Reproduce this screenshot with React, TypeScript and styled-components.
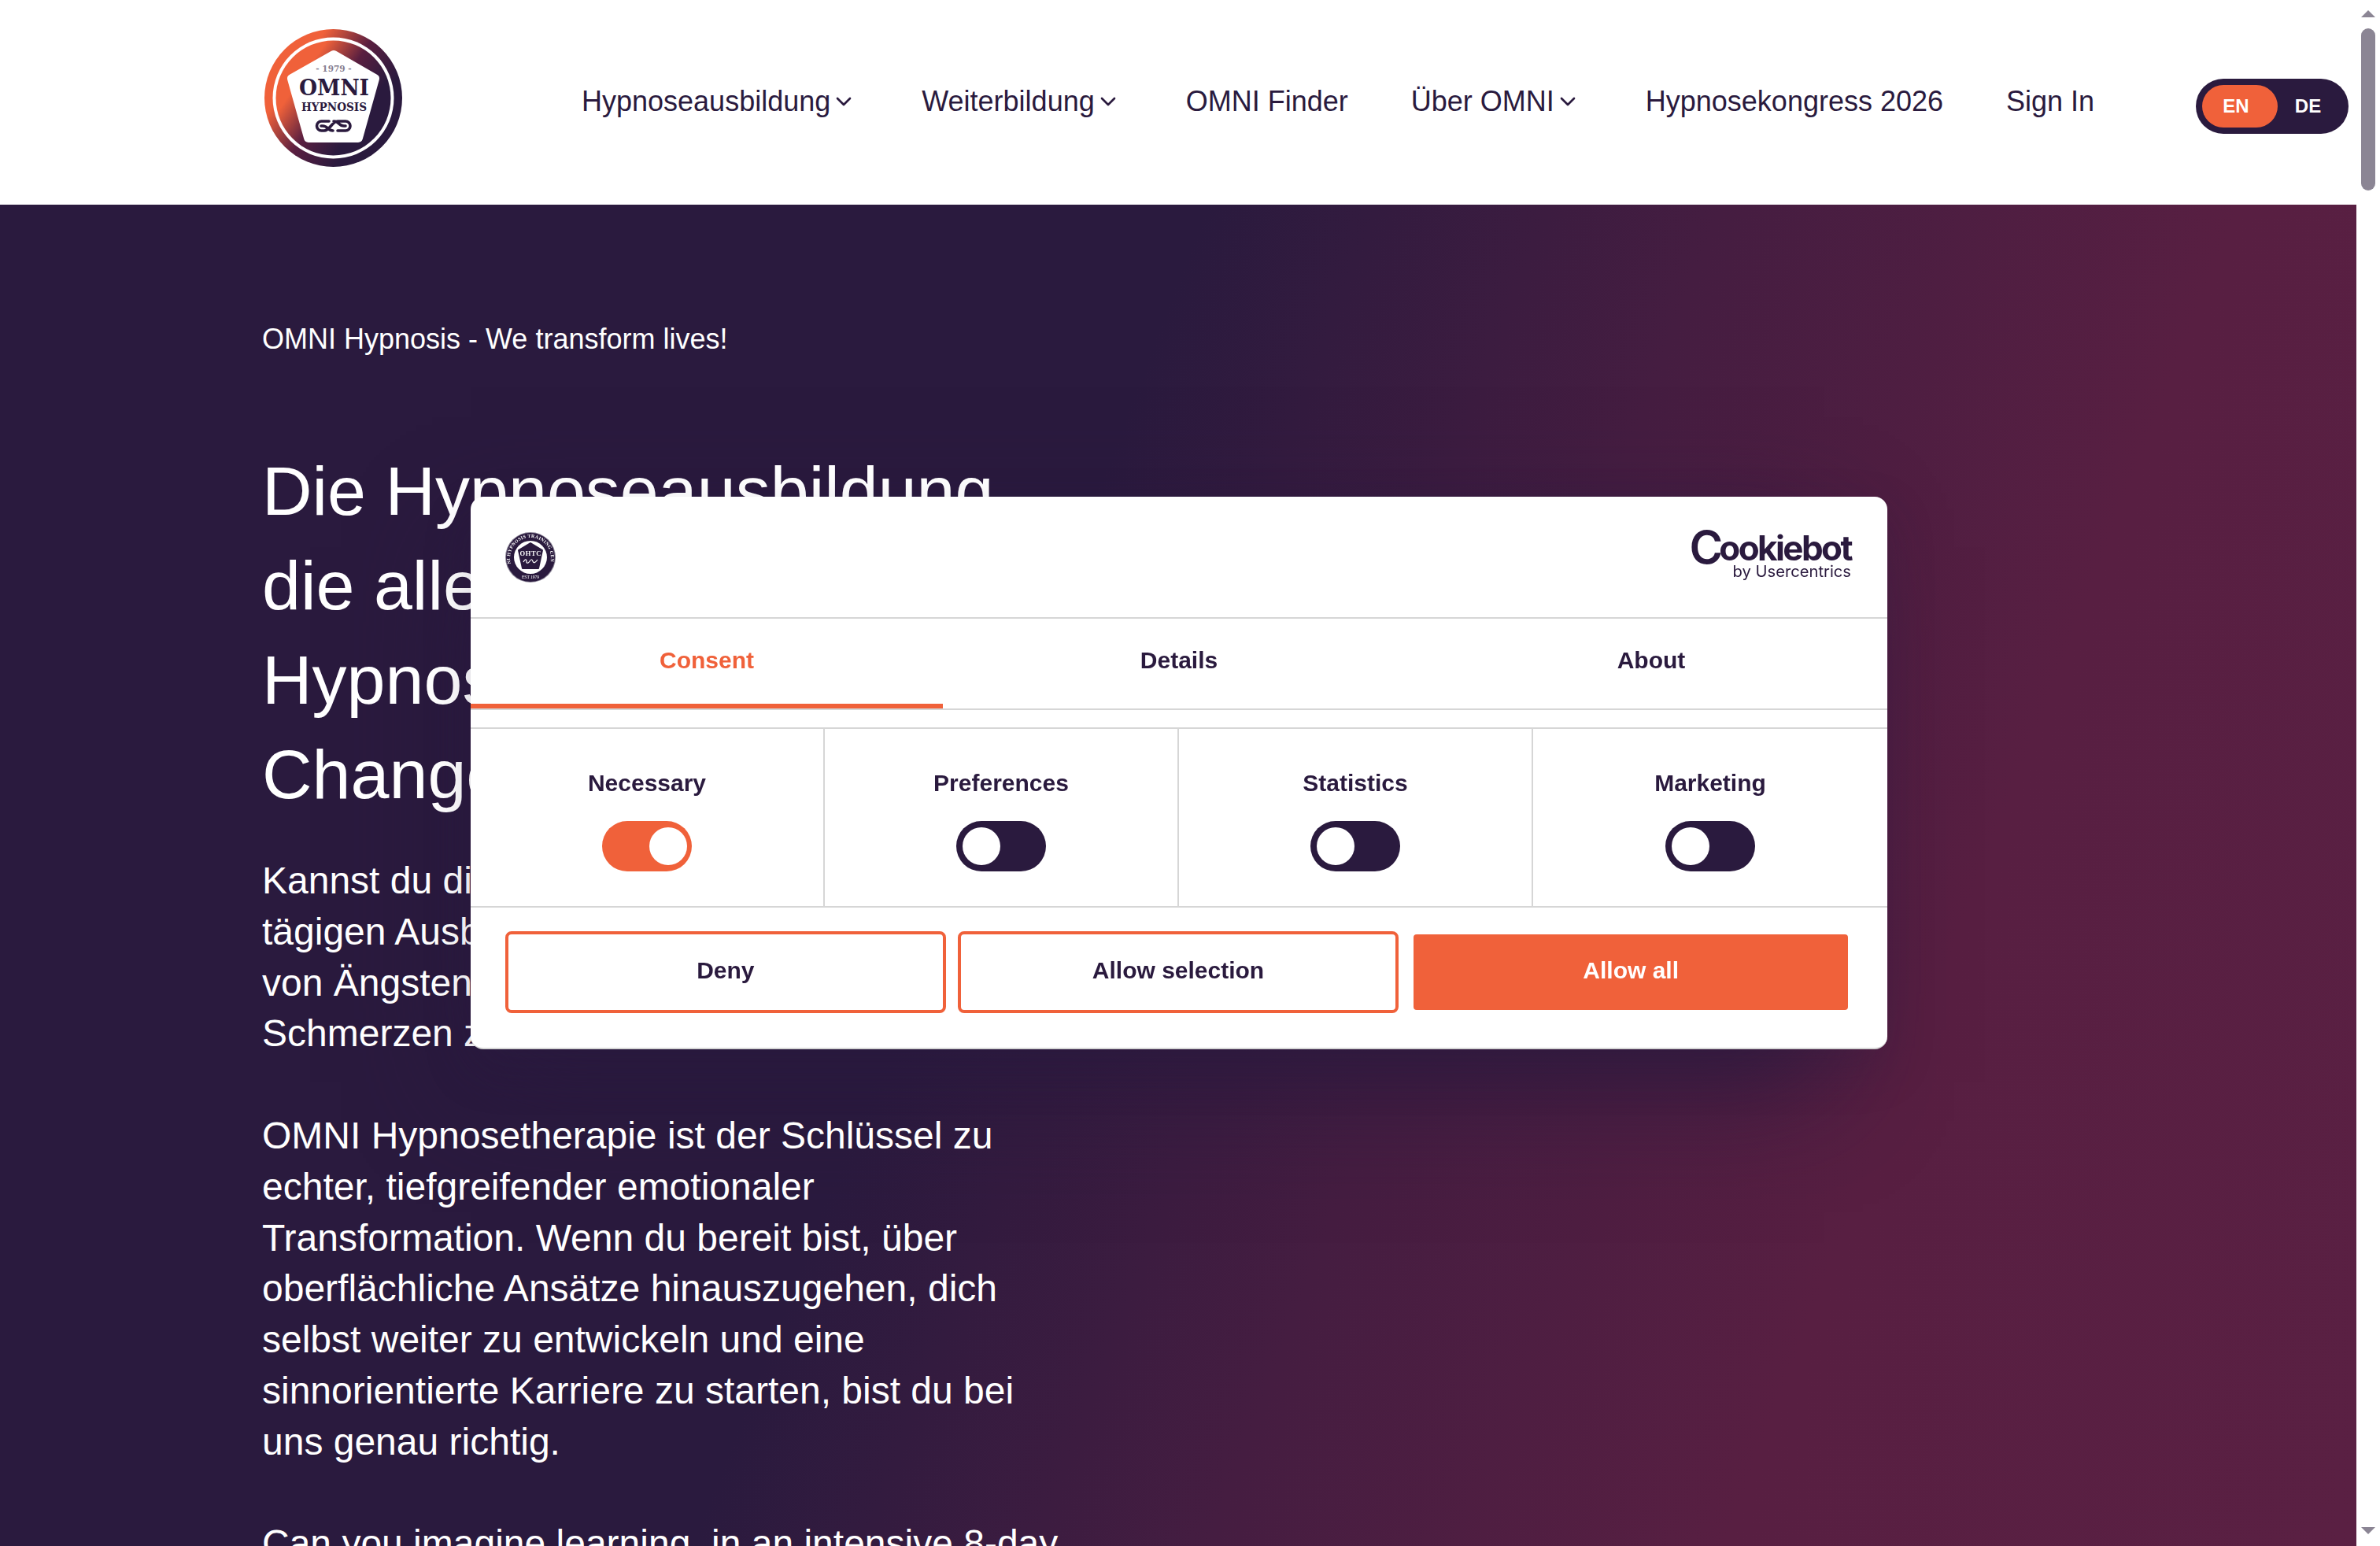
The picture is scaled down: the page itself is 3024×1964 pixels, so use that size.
import styled, { createGlobalStyle } from 'styled-components';
import { ChevronDown } from 'lucide-react';

const DARK = '#2a1a3e';
const ORANGE = '#f0613a';
const LINE = '#d6d6d6';

const navItems = [
  { label: 'Hypnoseausbildung', hasMenu: true },
  { label: 'Weiterbildung', hasMenu: true },
  { label: 'OMNI Finder', hasMenu: false },
  { label: 'Über OMNI', hasMenu: true },
  { label: 'Hypnosekongress 2026', hasMenu: false },
  { label: 'Sign In', hasMenu: false },
];

const categories = [
  { label: 'Necessary', on: true },
  { label: 'Preferences', on: false },
  { label: 'Statistics', on: false },
  { label: 'Marketing', on: false },
];

const tabs = ['Consent', 'Details', 'About'];

const GlobalStyle = createGlobalStyle`
  html, body {
    margin: 0;
    padding: 0;
    background: #fff;
    overflow: hidden;
  }
  * {
    box-sizing: border-box;
  }
`;

const Page = styled.div`
  display: flex;
  height: 1964px;
  overflow: hidden;
  font-family: "Liberation Sans", Arial, sans-serif;
  color: ${DARK};
`;

const Main = styled.main`
  flex: 1;
  min-width: 0;
  display: flex;
  flex-direction: column;
`;

const Header = styled.header`
  height: 260px;
  flex-shrink: 0;
  display: flex;
  align-items: flex-start;
  padding: 37px 10px 0 336px;
  background: #fff;
`;

const LogoSvg = styled.svg`
  width: 175px;
  height: 175px;
  flex-shrink: 0;
`;

const Nav = styled.nav`
  display: flex;
  align-items: center;
  gap: 80px;
  margin: 70px 0 0 228px;
`;

const NavItem = styled.a`
  display: flex;
  align-items: center;
  font-size: 36px;
  line-height: 44px;
  white-space: nowrap;
  svg {
    margin: 0 3px 0 1px;
  }
`;

const LangSwitch = styled.div`
  margin: 63px 0 0 auto;
  width: 194px;
  height: 70px;
  border-radius: 35px;
  background: ${DARK};
  display: flex;
  align-items: center;
  padding: 0 8px;
`;

const LangOption = styled.span<{ $active?: boolean }>`
  height: 54px;
  width: ${p => (p.$active ? '96px' : '77px')};
  border-radius: 27px;
  background: ${p => (p.$active ? ORANGE : 'transparent')};
  color: #fff;
  font-size: 24px;
  font-weight: 700;
  line-height: 54px;
  text-align: center;
  padding-right: ${p => (p.$active ? '10px' : '0')};
`;

const Hero = styled.section`
  position: relative;
  flex: 1;
  padding: 147px 0 0 333px;
  overflow: hidden;
  color: #fff;
  background: linear-gradient(111deg, #2a1a3e 0%, #2a1a3e 42%, #451d41 60%, #581f42 78%, #5a2043 100%);
`;

// dark glow that sits in the page background behind the dialog
const HeroShade = styled.div`
  position: absolute;
  left: 598px;
  top: 371px;
  width: 1720px;
  height: 680px;
  background: rgba(42, 26, 62, 0.9);
  box-shadow: 0 64px 136px rgba(42, 26, 62, 0.9);
`;

const HeroContent = styled.div`
  position: relative;
`;

const Tagline = styled.p`
  margin: 0 0 109px;
  font-size: 36px;
  line-height: 48px;
`;

const Title = styled.h1`
  margin: 0 0 43px;
  font-size: 88px;
  font-weight: 400;
  line-height: 120px;
  white-space: nowrap;
`;

const Copy = styled.p`
  margin: 0 0 64.8px;
  width: 1040px;
  font-size: 48px;
  line-height: 64.8px;
  white-space: nowrap;
`;

const ScrollBar = styled.div`
  width: 30px;
  flex-shrink: 0;
  display: flex;
  flex-direction: column;
  align-items: center;
  padding: 13px 0 15px;
  background: #fff;
`;

const ScrollArrow = styled.span<{ $down?: boolean }>`
  width: 0;
  height: 0;
  border-left: 9px solid transparent;
  border-right: 9px solid transparent;
  border-bottom: ${p => (p.$down ? '0' : `9px solid #8b8594`)};
  border-top: ${p => (p.$down ? `9px solid #8b8594` : '0')};
  margin-top: ${p => (p.$down ? 'auto' : '0')};
`;

const ScrollThumb = styled.span`
  width: 18px;
  height: 206px;
  margin-top: 14px;
  border-radius: 9px;
  background: #8b8594;
`;

const Overlay = styled.div`
  position: fixed;
  top: 0;
  bottom: 0;
  left: 0;
  right: 28px;
  display: flex;
  align-items: center;
  justify-content: center;
`;

const Dialog = styled.div`
  width: 1800px;
  height: 702px;
  display: flex;
  flex-direction: column;
  background: #fff;
  border-radius: 16px;
  border-bottom: 2px solid ${LINE};
  box-shadow: 0 24px 60px rgba(42, 26, 62, 0.22);
  color: ${DARK};
`;

const DialogHeader = styled.div`
  height: 155px;
  flex-shrink: 0;
  display: flex;
  align-items: center;
  justify-content: space-between;
  padding: 0 46px 0 44px;
  border-bottom: 2px solid ${LINE};
`;

const SealSvg = styled.svg`
  width: 64px;
  height: 64px;
`;

const Wordmark = styled.div`
  display: flex;
  flex-direction: column;
  align-items: flex-end;
  font-family: Inter, "Liberation Sans", sans-serif;
  margin-top: -4px;
`;

const WordmarkName = styled.span`
  font-size: 44px;
  font-weight: 700;
  line-height: 40px;
  letter-spacing: -2.6px;
  white-space: nowrap;
`;

const WordmarkInitial = styled.span`
  font-size: 58px;
  font-weight: 600;
  letter-spacing: -5px;
  line-height: 40px;
  vertical-align: -4px;
`;

const WordmarkSub = styled.span`
  font-size: 20.2px;
  line-height: 20px;
  white-space: nowrap;
`;

const TabRow = styled.div`
  display: grid;
  grid-template-columns: repeat(3, 1fr);
  height: 116px;
  flex-shrink: 0;
  border-bottom: 2px solid ${LINE};
`;

const Tab = styled.div<{ $active?: boolean }>`
  display: flex;
  align-items: center;
  justify-content: center;
  padding-bottom: 2px;
  font-size: 30px;
  font-weight: 700;
  color: ${p => (p.$active ? ORANGE : DARK)};
  border-bottom: 6px solid ${p => (p.$active ? ORANGE : 'transparent')};
`;

const ToggleRow = styled.div`
  display: grid;
  grid-template-columns: repeat(4, 1fr);
  flex-shrink: 0;
  height: 229px;
  margin-top: 22px;
  border-top: 2px solid ${LINE};
  border-bottom: 2px solid ${LINE};
`;

const ToggleCell = styled.div`
  display: flex;
  flex-direction: column;
  align-items: center;
  padding-top: 51px;
  border-right: 2px solid ${LINE};
  &:last-child {
    border-right: 0;
  }
`;

const ToggleLabel = styled.span`
  font-size: 30px;
  font-weight: 700;
  line-height: 36px;
  margin-bottom: 30px;
`;

const Toggle = styled.span<{ $on?: boolean }>`
  width: 114px;
  height: 64px;
  border-radius: 32px;
  display: flex;
  align-items: center;
  justify-content: ${p => (p.$on ? 'flex-end' : 'flex-start')};
  padding: 0 ${p => (p.$on ? '6px' : '8px')};
  background: ${p => (p.$on ? ORANGE : DARK)};
`;

const ToggleKnob = styled.span`
  width: 48px;
  height: 48px;
  border-radius: 50%;
  background: #fff;
`;

const ButtonRow = styled.div`
  display: flex;
  gap: 23.5px;
  padding: 34px 50px 0 48px;
`;

const ActionButton = styled.button<{ $primary?: boolean }>`
  width: 552px;
  height: 96px;
  padding: 0 0 5px;
  border: 0;
  border-radius: 4px;
  outline: ${p => (p.$primary ? '0' : `4px solid ${ORANGE}`)};
  background: ${p => (p.$primary ? ORANGE : '#fff')};
  color: ${p => (p.$primary ? '#fff' : DARK)};
  font-family: inherit;
  font-size: 30px;
  font-weight: 700;
`;

const OmniLogo = () => (
  <LogoSvg viewBox="0 0 175 175">
    <defs>
      <linearGradient id="omniGrad" x1="0.08" y1="0.22" x2="0.88" y2="0.78">
        <stop offset="0.18" stopColor={ORANGE} />
        <stop offset="0.5" stopColor="#5a1f40" />
        <stop offset="0.82" stopColor={DARK} />
      </linearGradient>
    </defs>
    <circle cx="87.5" cy="87.5" r="87.5" fill="url(#omniGrad)" />
    <circle cx="87.5" cy="87.5" r="77" fill="#fff" />
    <circle cx="87.5" cy="87.5" r="73" fill="url(#omniGrad)" />
    <path d="M88 33 140 63 119 138H56L35 63Z" fill="#fff" stroke="#fff" strokeWidth="12" strokeLinejoin="round" />
    <text x="88" y="54" textAnchor="middle" fontFamily="'DejaVu Serif', serif" fontWeight="700" fontSize="10.5" fill="#857d8f">
      - 1979 -
    </text>
    <text x="88.5" y="84" textAnchor="middle" textLength="89" lengthAdjust="spacingAndGlyphs" fontFamily="'DejaVu Serif', serif" fontWeight="700" fontSize="28" fill={DARK}>
      OMNI
    </text>
    <text x="88.5" y="104" textAnchor="middle" textLength="83" lengthAdjust="spacingAndGlyphs" fontFamily="'DejaVu Serif', serif" fontWeight="700" fontSize="15" fill={DARK}>
      HYPNOSIS
    </text>
    <path
      d="M82 117H72.500a6 6 0 0 0 0 12H76C83 129 86 117 93 117H103a6 6 0 0 1 0 12H93M72 123H74C81 123 80 129 87 129M88 117C95 117 94 123 101 123H103"
      fill="none"
      stroke={DARK}
      strokeWidth="3.6"
      strokeLinecap="round"
    />
  </LogoSvg>
);

const TrainingSeal = () => (
  <SealSvg viewBox="0 0 64 64">
    <defs>
      <path id="sealTop" d="M6.500 38A26 26 0 1 1 57.500 38" />
    </defs>
    <circle cx="32" cy="32" r="32" fill="#8e8899" />
    <circle cx="32" cy="32" r="31" fill={DARK} />
    <circle cx="32" cy="32" r="21" fill="#fff" />
    <text fontFamily="'Liberation Serif', serif" fontSize="6" fontWeight="700" fill="#fff" letterSpacing="0.35">
      <textPath href="#sealTop" startOffset="50%" textAnchor="middle">OMNI HYPNOSIS TRAINING CENTER</textPath>
    </text>
    <text x="32" y="59" textAnchor="middle" fontFamily="'Liberation Serif', serif" fontSize="5.5" fill="#fff">EST 1979</text>
    <path d="M32 14 47 23 42 46H22L17 23Z" fill={DARK} stroke={DARK} strokeWidth="2" strokeLinejoin="round" />
    <text x="32" y="30" textAnchor="middle" textLength="27" fontFamily="'Liberation Serif', serif" fontSize="8.5" fontWeight="700" fill="#fff">OHTC</text>
    <path d="M23 38c2-4 4-4 4-1s2 3 4 0 3-3 4 0 3 2 6-2" fill="none" stroke="#fff" strokeWidth="1.2" />
  </SealSvg>
);

export default function App() {
  return (
    <Page>
      <GlobalStyle />
      <Main>
        <Header>
          <OmniLogo />
          <Nav>
            {navItems.map(item => (
              <NavItem key={item.label}>
                {item.label}
                {item.hasMenu && <ChevronDown size={32} strokeWidth={2} />}
              </NavItem>
            ))}
          </Nav>
          <LangSwitch>
            <LangOption $active>EN</LangOption>
            <LangOption>DE</LangOption>
          </LangSwitch>
        </Header>
        <Hero>
          <HeroShade />
          <HeroContent>
            <Tagline>OMNI Hypnosis - We transform lives!</Tagline>
            <Title>
              Die Hypnoseausbildung
              <br />
              die alles verändert:
              <br />
              Hypnose für echte
              <br />
              Change
            </Title>
            <Copy>
              Kannst du dir vorstellen, in einer 8-
              <br />
              tägigen Ausbildung zu lernen, Menschen
              <br />
              von Ängsten, Süchten und chronischen
              <br />
              Schmerzen zu befreien?
            </Copy>
            <Copy>
              OMNI Hypnosetherapie ist der Schlüssel zu
              <br />
              echter, tiefgreifender emotionaler
              <br />
              Transformation. Wenn du bereit bist, über
              <br />
              oberflächliche Ansätze hinauszugehen, dich
              <br />
              selbst weiter zu entwickeln und eine
              <br />
              sinnorientierte Karriere zu starten, bist du bei
              <br />
              uns genau richtig.
            </Copy>
            <Copy>Can you imagine learning, in an intensive 8-day</Copy>
          </HeroContent>
        </Hero>
      </Main>
      <ScrollBar>
        <ScrollArrow />
        <ScrollThumb />
        <ScrollArrow $down />
      </ScrollBar>
      <Overlay>
        <Dialog>
          <DialogHeader>
            <TrainingSeal />
            <Wordmark>
              <WordmarkName>
                <WordmarkInitial>C</WordmarkInitial>ookiebot
              </WordmarkName>
              <WordmarkSub>by Usercentrics</WordmarkSub>
            </Wordmark>
          </DialogHeader>
          <TabRow>
            {tabs.map((tab, i) => (
              <Tab key={tab} $active={i === 0}>{tab}</Tab>
            ))}
          </TabRow>
          <ToggleRow>
            {categories.map(cat => (
              <ToggleCell key={cat.label}>
                <ToggleLabel>{cat.label}</ToggleLabel>
                <Toggle $on={cat.on}>
                  <ToggleKnob />
                </Toggle>
              </ToggleCell>
            ))}
          </ToggleRow>
          <ButtonRow>
            <ActionButton>Deny</ActionButton>
            <ActionButton>Allow selection</ActionButton>
            <ActionButton $primary>Allow all</ActionButton>
          </ButtonRow>
        </Dialog>
      </Overlay>
    </Page>
  );
}
